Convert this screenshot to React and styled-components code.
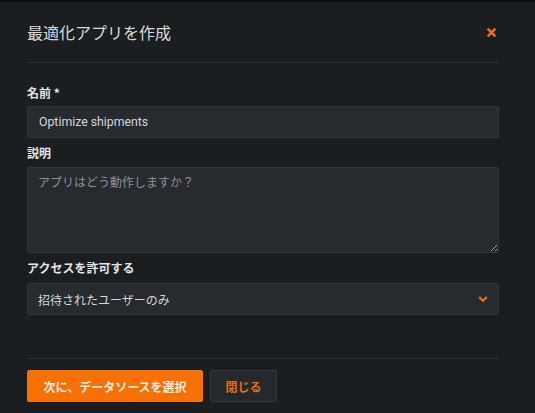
import React, { useState } from "react";
import styled, { createGlobalStyle } from "styled-components";

const GlobalStyle = createGlobalStyle`
  html, body {
    margin: 0;
    padding: 0;
    background: #0e1011;
  }
  body {
    font-family: "Roboto", "Noto Sans CJK JP", sans-serif;
    -webkit-font-smoothing: antialiased;
  }
`;

const Page = styled.div`
  width: 535px;
  height: 413px;
  display: flex;
  flex-direction: column;
  background: #0e1011;
  overflow: hidden;
`;

const Backdrop = styled.div`
  height: 2px;
  flex: none;
  background: #0b0c0d;
`;

const Modal = styled.div`
  flex: 1;
  background: #1b1e21;
  padding: 0 36px 0 27px;
  display: flex;
  flex-direction: column;
`;

const Header = styled.div`
  height: 60px;
  display: flex;
  align-items: center;
  justify-content: space-between;
  border-bottom: 1px solid #2c3034;
`;

const Title = styled.h2`
  margin: 0;
  font-size: 16px;
  font-weight: 400;
  color: #d9dcdf;
  font-family: "Noto Sans CJK JP", sans-serif;
`;

const CloseButton = styled.button`
  background: none;
  border: none;
  padding: 0;
  margin-right: 2px;
  display: flex;
  cursor: pointer;
`;

const Body = styled.div`
  padding-top: 21px;
  display: flex;
  flex-direction: column;
  flex: 1;
`;

const Field = styled.div`
  display: flex;
  flex-direction: column;
  margin-bottom: ${(p) => (p.gap === undefined ? 6 : p.gap)}px;
`;

const Label = styled.label`
  font-size: 12px;
  font-weight: 700;
  color: #e3e5e7;
  line-height: 18px;
  margin-bottom: ${(p) => p.space || 5}px;
  font-family: "Noto Sans CJK JP", sans-serif;
`;

const boxStyle = `
  box-sizing: border-box;
  width: 100%;
  background: #272b2f;
  border: 1px solid #31363a;
  border-radius: 2px;
  color: #d4d7da;
  font-family: "Roboto", "Noto Sans CJK JP", sans-serif;
  outline: none;
`;

const Input = styled.input`
  ${boxStyle}
  height: 32px;
  padding: 0 10px 0 11px;
  font-size: 12.3px;
`;

const TextArea = styled.textarea`
  ${boxStyle}
  height: 86px;
  padding: 6px 10px;
  font-size: 12px;
  line-height: 18px;
  resize: vertical;
  &::placeholder {
    color: #8c9196;
  }
`;

const SelectBox = styled.div`
  ${boxStyle}
  height: 32px;
  padding: 0 10px;
  display: flex;
  align-items: center;
  justify-content: space-between;
  font-size: 12px;
  font-family: "Noto Sans CJK JP", sans-serif;
`;

const Footer = styled.div`
  border-top: 1px solid #2c3034;
  padding-top: 11px;
  margin-top: auto;
  margin-bottom: 11px;
  display: flex;
  gap: 7px;
`;

const Button = styled.button`
  height: 32px;
  padding: 0 ${(p) => (p.primary ? 15.5 : 14.5)}px;
  border-radius: 2px;
  font-size: 12px;
  font-weight: 700;
  font-family: "Noto Sans CJK JP", sans-serif;
  cursor: pointer;
  border: 1px solid ${(p) => (p.primary ? "#f77002" : "#33383c")};
  background: ${(p) => (p.primary ? "#f77002" : "#25292d")};
  color: ${(p) => (p.primary ? "#fbeee3" : "#e36d12")};
`;

const CloseIcon = () => (
  <svg width="11" height="11" viewBox="0 0 10 10">
    <path
      d="M1.5 1.5 L8.5 8.5 M8.5 1.5 L1.5 8.5"
      stroke="#f36f12"
      strokeWidth="2.2"
      strokeLinecap="butt"
    />
  </svg>
);

const Chevron = () => (
  <svg width="10" height="8" viewBox="0 0 10 8">
    <path
      d="M1.2 2 L5 5.8 L8.8 2"
      fill="none"
      stroke="#f36f12"
      strokeWidth="2"
    />
  </svg>
);

export default function App() {
  const [name, setName] = useState("Optimize shipments");
  const [desc, setDesc] = useState("");

  return (
    <>
      <GlobalStyle />
      <Page>
        <Backdrop />
        <Modal>
          <Header>
            <Title>最適化アプリを作成</Title>
            <CloseButton aria-label="close">
              <CloseIcon />
            </CloseButton>
          </Header>
          <Body>
            <Field>
              <Label space={4}>名前 *</Label>
              <Input value={name} onChange={(e) => setName(e.target.value)} />
            </Field>
            <Field>
              <Label space={5}>説明</Label>
              <TextArea
                placeholder="アプリはどう動作しますか？"
                value={desc}
                onChange={(e) => setDesc(e.target.value)}
              />
            </Field>
            <Field gap={0}>
              <Label space={6}>アクセスを許可する</Label>
              <SelectBox>
                <span>招待されたユーザーのみ</span>
                <Chevron />
              </SelectBox>
            </Field>
            <Footer>
              <Button primary>次に、データソースを選択</Button>
              <Button>閉じる</Button>
            </Footer>
          </Body>
        </Modal>
      </Page>
    </>
  );
}
